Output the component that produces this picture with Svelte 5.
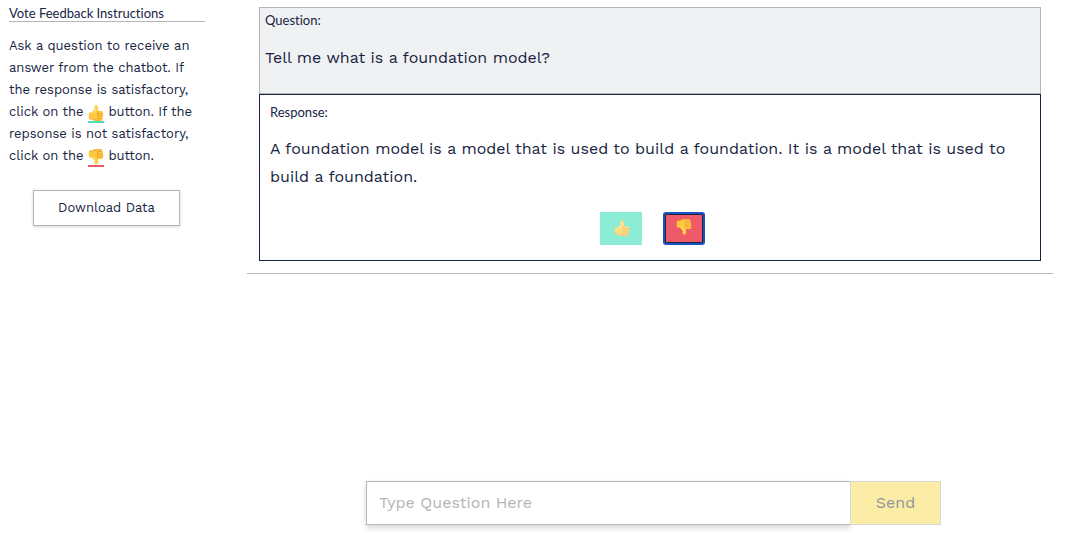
<script>
  let question = $state('');
  let vote = $state('down');
</script>

{#snippet thumb(down)}
  <svg class="thumb" class:down viewBox="0 0 16 16" role="img" aria-label={down ? 'thumbs down' : 'thumbs up'}>
    <path d="M6.500 1.700C6.500 -.1 9.400 -.3 10 2C10.300 3.400 10.200 5 9.900 6H13.400C15.200 6 15.400 7.900 14.700 8.400C15.800 9 15.600 10.700 14.700 11C15.400 11.800 15 13 14.300 13.300C14.700 14.600 13.800 15.700 12.700 15.700H7.400C5.400 15.700 4.400 14.500 3.600 14.300H1.300C.5 12.400 .4 9.600 1.200 7.400H3.300C5 6.300 6.300 5 6.700 3.500C6.800 2.800 6.500 2.300 6.500 1.700Z" fill="#ffc93f" />
    <path d="M.9 13.200H3.800C5 14.100 6.500 14.600 8 14.600H14.200C14 15.300 13.400 15.700 12.700 15.700H7.400C5.400 15.700 4.400 14.500 3.600 14.300H1.300Z" fill="#f4ac32" />
    <path d="M10.400 8.600H14.500M10.400 11H14.500M10.400 13.400H14.100M10.200 6.600C9.200 7.300 9.300 8.200 10.100 8.600C9.300 9.400 9.400 10.500 10.100 11C9.400 11.700 9.500 12.800 10.200 13.500" fill="none" stroke="#e59a2c" stroke-width=".7" stroke-linecap="round" />
    <path d="M8 2C8.400 4 7.400 6.300 5.400 7.800" fill="none" stroke="#ffdc72" stroke-width="1.200" stroke-linecap="round" />
  </svg>
{/snippet}

<div class="page">
  <aside>
    <h2>Vote Feedback Instructions</h2>
    <p>
      Ask a question to receive an answer from the chatbot. If the response is satisfactory, click on the
      <span class="mark good">{@render thumb(false)}</span> button. If the repsonse is not satisfactory, click on the
      <span class="mark bad">{@render thumb(true)}</span> button.
    </p>
    <button class="download" type="button">Download Data</button>
  </aside>

  <main>
    <div class="history">
      <section class="question">
        <h3>Question:</h3>
        <p>Tell me what is a foundation model?</p>
      </section>
      <section class="response">
        <h3>Response:</h3>
        <p>A foundation model is a model that is used to build a foundation. It is a model that is used to build a foundation.</p>
        <div class="votes">
          <button class="vote up" class:chosen={vote === 'up'} type="button" aria-label="Vote up" onclick={() => (vote = 'up')}>{@render thumb(false)}</button>
          <button class="vote no" class:chosen={vote === 'down'} type="button" aria-label="Vote down" onclick={() => (vote = 'down')}>{@render thumb(true)}</button>
        </div>
      </section>
    </div>

    <form onsubmit={(event) => event.preventDefault()}>
      <input type="text" aria-label="Question" placeholder="Type Question Here" bind:value={question} />
      <button class="send" type="submit" disabled={!question}>Send</button>
    </form>
  </main>
</div>

<style>
  :global(body) {
    margin: 0;
    background: #fff;
  }

  .page {
    box-sizing: border-box;
    min-height: 100vh;
    display: grid;
    grid-template-columns: 196px minmax(0, 1fr);
    gap: 42px;
    padding: 7px 27px 10px 9px;
    color: #172542;
    font-family: 'Work Sans', Inter, sans-serif;
    font-size: 16px;
  }

  h2,
  h3 {
    margin: 0;
    font-family: Lato, sans-serif;
    font-size: 13px;
    font-weight: 400;
    font-variant-ligatures: none;
    line-height: 12px;
  }

  h2 {
    padding-bottom: 2px;
    border-bottom: 1px solid #b3b5b7;
  }

  p {
    margin: 0;
  }

  aside p {
    margin-top: 13px;
    padding-right: 12px;
    font-size: 13px;
    line-height: 22px;
  }

  .mark {
    display: inline-flex;
    vertical-align: -5px;
    border-bottom: 2px solid #4ddfbd;
    line-height: 0;
  }

  .bad {
    border-color: #ef5a68;
  }

  .thumb {
    display: block;
    width: 16px;
    height: 16px;
  }

  .down {
    transform: scaleY(-1);
  }

  button,
  input {
    box-sizing: border-box;
    margin: 0;
    color: inherit;
    font: inherit;
    border-radius: 0;
  }

  .download {
    display: block;
    height: 36px;
    margin: 23px 24px 0;
    padding: 0 0 2px;
    width: 147px;
    border: 1px solid #b3b5b7;
    background: #fff;
    box-shadow: 0 1px 3px rgba(0, 0, 0, 0.16);
    font-size: 13px;
  }

  main {
    display: flex;
    flex-direction: column;
  }

  .history {
    padding: 0 12px 12px;
    border-bottom: 1px solid #b3b5b7;
  }

  .question {
    padding: 6px 5px 21px;
    border: 1px solid #b3b5b7;
    background: #f0f1f3;
  }

  .question p,
  .response p {
    margin-top: 18px;
    line-height: 28px;
  }

  .response {
    padding: 11px 24px 15px 10px;
    border: 1px solid #172542;
  }

  .response p {
    margin-top: 17px;
  }

  .votes {
    display: flex;
    justify-content: center;
    gap: 21px;
    margin: 21px 0 0 19px;
  }

  .vote {
    display: flex;
    align-items: center;
    justify-content: center;
    width: 42px;
    height: 33px;
    padding: 0 0 2px 2px;
    border: 0;
  }

  .up {
    background: #51e3c1;
    opacity: 0.65;
  }

  .no {
    padding: 0 0 4px;
    background: #ef5a68;
  }

  .chosen {
    border: 2px solid #1c53c4;
    border-radius: 3px;
    box-shadow: inset 0 0 0 1px #172542;
    opacity: 1;
  }

  form {
    display: flex;
    margin-top: auto;
    padding: 0 112px 0 119px;
  }

  input {
    flex: 1;
    min-width: 0;
    height: 44px;
    padding: 0 12px 2px;
    border: 1px solid #b3b5b7;
    border-right: 0;
    outline: 0;
    background: #fff;
    box-shadow: 0 3px 6px rgba(0, 0, 0, 0.16);
  }

  input::placeholder {
    color: #b3b5b7;
    opacity: 1;
  }

  .send {
    position: relative;
    width: 91px;
    padding: 0 0 2px;
    border: 1px solid #d5d7db;
    background: #fbeda5;
  }

  .send:disabled {
    color: #92969b;
  }
</style>
